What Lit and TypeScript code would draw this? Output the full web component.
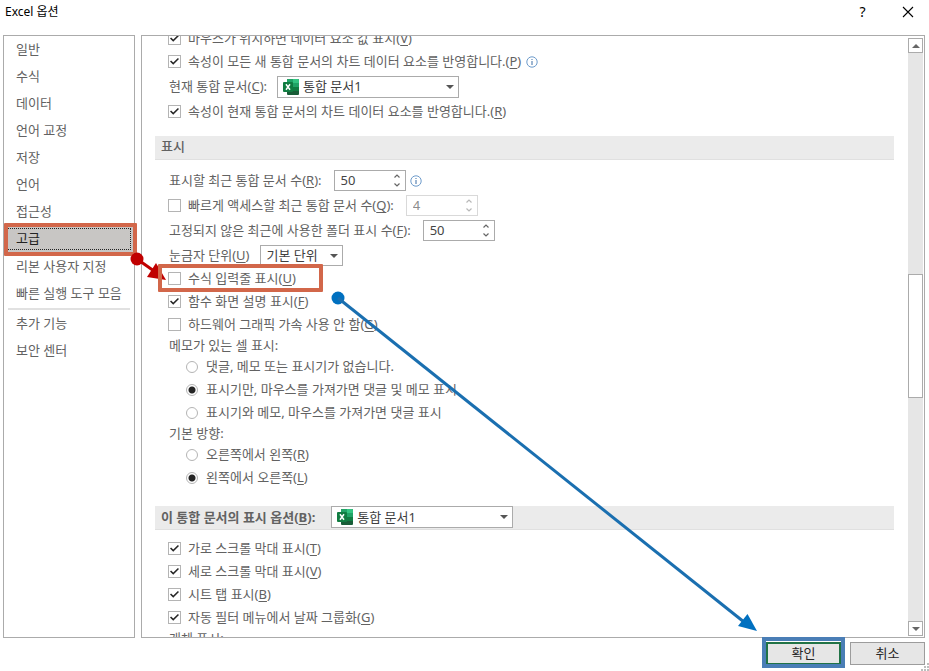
import { LitElement, html, svg, css, nothing } from "lit";
import { customElement, property } from "lit/decorators.js";

const excelIcon = html`<svg class="excel" viewBox="0 0 16 16" aria-hidden="true">
  <rect x="4" y="0" width="12" height="16" rx="1" fill="#185c37" />
  <path d="M5 0h5v4H4V1a1 1 0 0 1 1-1z" fill="#21a366" />
  <path d="M10 0h5a1 1 0 0 1 1 1v3h-6z" fill="#33c481" />
  <rect x="4" y="4" width="6" height="4" fill="#107c41" />
  <rect x="10" y="4" width="6" height="4" fill="#21a366" />
  <rect x="10" y="8" width="6" height="4" fill="#107c41" />
  <rect x="0" y="3" width="10" height="10" rx="1" fill="#107c41" />
  <path d="M3 5.2l4 5.6M7 5.2l-4 5.6" stroke="#fff" stroke-width="1.5" fill="none" />
</svg>`;

const infoIcon = html`<svg class="info" viewBox="0 0 12 12" role="img" aria-label="info">
  <circle cx="6" cy="6" r="5.2" fill="none" stroke="#6d9bcb" />
  <rect x="5.500" y="5" width="1" height="4" fill="#3c6ea5" />
  <rect x="5.500" y="3" width="1" height="1" fill="#3c6ea5" />
</svg>`;

const caret = html`<svg class="caret" viewBox="0 0 8 4" aria-hidden="true">
  <path d="M0 0h8L4 4z" fill="#555" />
</svg>`;

/* Splits "label(K)suffix" so that the access key is underlined. */
const keyed = (text: string) => {
  const m = /^(.*)\(([A-Z])\)(.*)$/.exec(text);
  return m ? html`${m[1]}(<u>${m[2]}</u>)${m[3]}` : html`${text}`;
};

const shared = css`
  * {
    box-sizing: border-box;
  }
  input,
  select,
  button {
    font: inherit;
    margin: 0;
  }
  u {
    text-underline-offset: 2px;
  }
`;

@customElement("check-row")
class CheckRow extends LitElement {
  @property() label = "";
  @property({ type: Boolean }) checked = false;
  @property({ type: Boolean }) info = false;
  @property({ type: Boolean }) marked = false;
  static styles = [
    shared,
    css`
      :host {
        display: flex;
        align-items: center;
        height: 23px;
      }
      label {
        position: relative;
        display: flex;
        align-items: center;
        gap: 7px;
        white-space: nowrap;
      }
      .box {
        appearance: none;
        width: 13px;
        height: 13px;
        flex: none;
        border: 1px solid #b4b4b4;
        background: #fff;
        display: grid;
        place-items: center;
      }
      .box:checked::before {
        content: "";
        width: 9px;
        height: 9px;
        background: #262626;
        clip-path: polygon(0 50%, 12% 38%, 36% 62%, 88% 10%, 100% 22%, 36% 86%);
      }
      .info {
        width: 12px;
        height: 12px;
        margin-left: 5px;
      }
      .marked::after {
        content: "";
        position: absolute;
        z-index: 1;
        inset: -5px -27px -4px -10px;
        border: 4px solid #d2674a;
        border-radius: 1px;
      }
    `,
  ];
  render() {
    return html`<label class=${this.marked ? "marked" : ""}>
        <input class="box" type="checkbox" .checked=${this.checked} />
        <span>${keyed(this.label)}</span>
      </label>${this.info ? infoIcon : nothing}`;
  }
}

@customElement("number-field")
class NumberField extends LitElement {
  @property() value = "";
  @property() label = "";
  @property({ type: Boolean }) disabled = false;
  static styles = [
    shared,
    css`
      :host {
        display: flex;
        width: 72px;
        height: 21px;
        border: 1px solid #ababab;
        background: #fff;
        color: #444;
      }
      :host([disabled]) {
        border-color: #d9d9d9;
        color: #8c8c8c;
      }
      .value {
        appearance: textfield;
        flex: 1;
        min-width: 0;
        border: 0;
        padding: 0 0 0 6px;
        background: none;
        color: inherit;
        outline: none;
      }
      .value::-webkit-inner-spin-button {
        appearance: none;
      }
      .spin {
        display: flex;
        flex-direction: column;
        width: 16px;
        color: #666;
      }
      :host([disabled]) .spin {
        color: #b8b8b8;
      }
      .step {
        flex: 1;
        min-height: 0;
        border: 0;
        padding: 0;
        background: none;
        color: inherit;
        display: grid;
        place-items: center;
      }
      .step svg {
        width: 6px;
        height: 4px;
      }
    `,
  ];
  render() {
    const step = (name: string, d: string) => html`<button
      class="step"
      aria-label=${name}
      ?disabled=${this.disabled}
    >
      <svg viewBox="0 0 6 4"><path d=${d} fill="none" stroke="currentColor" stroke-width="1.2" /></svg>
    </button>`;
    return html`<input
        class="value"
        type="number"
        aria-label=${this.label}
        .value=${this.value}
        ?disabled=${this.disabled}
      />
      <span class="spin">${step("up", "M.5 3.5L3 1l2.5 2.5")}${step("down", "M.5 .5L3 3 5.5 .5")}</span>`;
  }
}

@customElement("drop-down")
class DropDown extends LitElement {
  @property() value = "";
  @property() label = "";
  @property({ type: Boolean }) workbook = false;
  static styles = [
    shared,
    css`
      :host {
        display: flex;
        align-items: center;
        position: relative;
        width: 83px;
        height: 21px;
        padding-left: 2px;
        border: 1px solid #ababab;
        background: #fff;
        color: #404040;
        font-weight: 400;
        line-height: 19px;
      }
      :host([workbook]) {
        width: 182px;
        height: 22px;
        padding-left: 5px;
      }
      .excel {
        width: 16px;
        height: 16px;
        flex: none;
      }
      .list {
        appearance: none;
        flex: 1;
        min-width: 0;
        height: 19px;
        border: 0;
        padding: 0 16px 0 4px;
        background: none;
        color: inherit;
        outline: none;
      }
      .caret {
        position: absolute;
        right: 4px;
        width: 8px;
        height: 4px;
        pointer-events: none;
      }
    `,
  ];
  render() {
    return html`${this.workbook ? excelIcon : nothing}
      <select class="list" aria-label=${this.label}>
        <option>${this.value}</option>
      </select>
      ${caret}`;
  }
}

@customElement("radio-set")
class RadioSet extends LitElement {
  @property() label = "";
  @property({ type: Array }) options: string[] = [];
  @property({ type: Number }) selected = 0;
  static styles = [
    shared,
    css`
      :host {
        display: block;
      }
      .set {
        border: 0;
        margin: 0;
        padding: 0;
        min-width: 0;
      }
      .caption {
        padding: 0 0 0 1px;
        height: 19px;
        line-height: 19px;
      }
      .option {
        display: flex;
        align-items: center;
        gap: 8px;
        height: 23px;
        padding-left: 18px;
        white-space: nowrap;
      }
      .dot {
        appearance: none;
        flex: none;
        width: 12px;
        height: 12px;
        border: 1px solid #b4b4b4;
        border-radius: 50%;
        background: #fff;
      }
      .dot:checked {
        background: radial-gradient(circle, #262626 2px, #262626 3px, #fff 4px);
      }
    `,
  ];
  render() {
    return html`<fieldset class="set">
      <legend class="caption">${this.label}</legend>
      ${this.options.map(
        (o, i) => html`<label class="option">
          <input class="dot" type="radio" name="choice" .checked=${i === this.selected} />
          <span>${keyed(o)}</span>
        </label>`
      )}
    </fieldset>`;
  }
}

@customElement("app-root")
class AppRoot extends LitElement {
  static styles = [
    shared,
    css`
      :host {
        display: flex;
        flex-direction: column;
        position: relative;
        height: 100vh;
        overflow: hidden;
        background: #fff;
        color: #626262;
        font: 13px/19px "Noto Sans", "Noto Sans CJK KR", sans-serif;
      }
      .title {
        display: flex;
        align-items: center;
        height: 35px;
        padding: 0 14px 12px 5px;
        color: #000;
        font-size: 12px;
      }
      .title h1 {
        flex: 1;
        margin: 0;
        font: inherit;
      }
      .tool {
        display: grid;
        place-items: center;
        width: 45px;
        height: 23px;
        border: 0;
        padding: 0;
        background: none;
        color: #000;
        font-size: 14px;
      }
      .tool:last-child {
        width: 14px;
        margin-left: 16px;
      }
      .tool svg {
        width: 12px;
        height: 12px;
      }
      .body {
        display: flex;
        flex: 1;
        min-height: 0;
        gap: 6px;
        padding: 0 4px 0 3px;
      }
      .nav {
        flex: none;
        width: 132px;
        border: 1px solid #ababab;
      }
      .item {
        display: block;
        height: 27px;
        padding-left: 12px;
        line-height: 27px;
        color: inherit;
        text-decoration: none;
        white-space: nowrap;
      }
      .item.current {
        position: relative;
        height: 28px;
        background: #c8c6c4;
        color: #222;
        outline: 1px dotted #222;
        outline-offset: -4px;
      }
      .item.current::after {
        content: "";
        position: absolute;
        inset: -2px -3px -3px 0;
        border: 4px solid #d2674a;
        border-radius: 1px;
      }
      .rule {
        height: 2px;
        margin: 1px 4px 0;
        border: 0;
        background: #e1e1e1;
      }
      .pane {
        display: flex;
        flex: 1;
        min-width: 0;
        border: 1px solid #ababab;
        padding-right: 1px;
      }
      .content {
        flex: 1;
        min-width: 0;
        overflow: hidden;
        padding: 0 14px 0 13px;
      }
      .group {
        padding-left: 13px;
      }
      .group.first {
        margin-top: -9px;
      }
      .head {
        display: flex;
        height: 24px;
        margin: 0;
        padding-left: 6px;
        background: #ebebeb;
        border-bottom: 1px solid #e0e0e0;
        font-size: 13px;
        line-height: 21px;
        font-weight: 500;
      }
      .head.strong {
        gap: 16px;
        line-height: 23px;
        font-weight: 700;
      }
      .line {
        display: flex;
        align-items: center;
        padding-left: 1px;
        white-space: nowrap;
      }
      .line.tall {
        height: 27px;
        gap: 10px;
      }
      .fields {
        display: grid;
        gap: 4px;
        padding: 10px 0 1px 13px;
      }
      .fields .line {
        height: 21px;
        gap: 12px;
      }
      .fields .line.unit {
        gap: 10px;
      }
      .fields .line.flush {
        padding-left: 0;
      }
      .info {
        width: 12px;
        height: 12px;
        margin-left: -8px;
      }
      .space-1 {
        height: 13px;
      }
      .space-2 {
        height: 17px;
      }
      .group.last {
        padding-top: 7px;
      }
      .scroll {
        display: flex;
        flex-direction: column;
        flex: none;
        width: 15px;
        margin: 2px 0 1px;
        background: #e6e6e6;
      }
      .arrow {
        display: grid;
        place-items: center;
        flex: none;
        height: 15px;
        border: 1px solid #ababab;
        padding: 0;
        background: #fff;
      }
      .arrow svg {
        width: 8px;
        height: 4px;
      }
      .before {
        flex: 222 0 0;
      }
      .thumb {
        flex: 122 0 0;
        border: 1px solid #ababab;
        background: #fff;
      }
      .after {
        flex: 224 0 0;
      }
      .footer {
        display: flex;
        justify-content: flex-end;
        gap: 9px;
        height: 33px;
        padding: 4px 4px 6px 0;
      }
      .push {
        position: relative;
        width: 75px;
        border: 1px solid #9c9c9c;
        padding: 0;
        background: #e6e6e6;
        color: #262626;
        line-height: 19px;
      }
      .push.primary {
        border: 2px solid #217346;
      }
      .push.primary::after {
        content: "";
        position: absolute;
        inset: -7px -6px -5px -6px;
        border: 4px solid #4a7eb6;
      }
      .grip {
        position: absolute;
        right: 0;
        bottom: 0;
        width: 8px;
        height: 8px;
      }
      .marks {
        position: absolute;
        left: 0;
        top: 0;
        width: 100%;
        height: 100%;
        pointer-events: none;
      }
    `,
  ];

  render() {
    const nav = ["일반", "수식", "데이터", "언어 교정", "저장", "언어", "접근성", "고급", "리본 사용자 지정", "빠른 실행 도구 모음"];
    const item = (t: string) =>
      html`<a class="item ${t === "고급" ? "current" : ""}" href="#">${t}</a>`;
    const grip = [
      [6, 0], [3, 3], [6, 3], [0, 6], [3, 6], [6, 6],
    ];
    return html`
      <header class="title">
        <h1>Excel 옵션</h1>
        <button class="tool" aria-label="도움말">?</button>
        <button class="tool" aria-label="닫기">
          <svg viewBox="0 0 12 12"><path d="M1 1l10 10M11 1L1 11" stroke="#000" stroke-width="1.1" /></svg>
        </button>
      </header>
      <div class="body">
        <nav class="nav">
          ${nav.map(item)}
          <hr class="rule" />
          ${["추가 기능", "보안 센터"].map(item)}
        </nav>
        <main class="pane">
          <div class="content">
            <div class="group first">
              <check-row checked label="마우스가 위치하면 데이터 요소 값 표시(V)"></check-row>
              <check-row checked info label="속성이 모든 새 통합 문서의 차트 데이터 요소를 반영합니다.(P)"></check-row>
              <div class="line tall">
                <span>${keyed("현재 통합 문서(C):")}</span>
                <drop-down workbook label="현재 통합 문서" value="통합 문서1"></drop-down>
              </div>
              <check-row checked label="속성이 현재 통합 문서의 차트 데이터 요소를 반영합니다.(R)"></check-row>
            </div>
            <div class="space-1"></div>
            <h2 class="head">표시</h2>
            <div class="fields">
              <div class="line">
                <span>${keyed("표시할 최근 통합 문서 수(R):")}</span>
                <number-field label="표시할 최근 통합 문서 수" value="50"></number-field>
                ${infoIcon}
              </div>
              <div class="line flush">
                <check-row label="빠르게 액세스할 최근 통합 문서 수(Q):"></check-row>
                <number-field disabled label="빠르게 액세스할 최근 통합 문서 수" value="4"></number-field>
              </div>
              <div class="line">
                <span>${keyed("고정되지 않은 최근에 사용한 폴더 표시 수(F):")}</span>
                <number-field label="폴더 표시 수" value="50"></number-field>
              </div>
              <div class="line unit">
                <span>${keyed("눈금자 단위(U)")}</span>
                <drop-down label="눈금자 단위" value="기본 단위"></drop-down>
              </div>
            </div>
            <div class="group">
              <check-row marked label="수식 입력줄 표시(U)"></check-row>
              <check-row checked label="함수 화면 설명 표시(F)"></check-row>
              <check-row label="하드웨어 그래픽 가속 사용 안 함(G)"></check-row>
              <radio-set
                label="메모가 있는 셀 표시:"
                .options=${[
                  "댓글, 메모 또는 표시기가 없습니다.",
                  "표시기만, 마우스를 가져가면 댓글 및 메모 표시",
                  "표시기와 메모, 마우스를 가져가면 댓글 표시",
                ]}
                selected="1"
              ></radio-set>
              <radio-set
                label="기본 방향:"
                .options=${["오른쪽에서 왼쪽(R)", "왼쪽에서 오른쪽(L)"]}
                selected="1"
              ></radio-set>
            </div>
            <div class="space-2"></div>
            <h2 class="head strong">
              <span>${keyed("이 통합 문서의 표시 옵션(B):")}</span>
              <drop-down workbook label="통합 문서 선택" value="통합 문서1"></drop-down>
            </h2>
            <div class="group last">
              <check-row checked label="가로 스크롤 막대 표시(T)"></check-row>
              <check-row checked label="세로 스크롤 막대 표시(V)"></check-row>
              <check-row checked label="시트 탭 표시(B)"></check-row>
              <check-row checked label="자동 필터 메뉴에서 날짜 그룹화(G)"></check-row>
              <div class="line">개체 표시:</div>
            </div>
          </div>
          <div class="scroll">
            <button class="arrow" aria-label="위로">
              <svg viewBox="0 0 8 4"><path d="M0 4h8L4 0z" fill="#666" /></svg>
            </button>
            <div class="before"></div>
            <div class="thumb"></div>
            <div class="after"></div>
            <button class="arrow" aria-label="아래로">
              <svg viewBox="0 0 8 4"><path d="M0 0h8L4 4z" fill="#666" /></svg>
            </button>
          </div>
        </main>
      </div>
      <footer class="footer">
        <button class="push primary">확인</button>
        <button class="push">취소</button>
      </footer>
      <svg class="grip" viewBox="0 0 8 8" aria-hidden="true">
        ${grip.map(([x, y]) => svg`<rect x=${x} y=${y} width="2" height="2" fill="#bdbdbd" />`)}
      </svg>
      <svg class="marks" aria-hidden="true">
        <g fill="#c00000">
          <circle cx="137" cy="259" r="6.5" />
          <path d="M137 259L154 271" stroke="#c00000" stroke-width="3" />
          <path d="M166 280L147 277L156 263z" />
        </g>
        <g fill="#0070c0">
          <circle cx="338" cy="298" r="6.5" />
          <path d="M338 298L744 622" stroke="#1a6fb0" stroke-width="3" />
          <path d="M757 631L738 626L747.5 614z" />
        </g>
      </svg>
    `;
  }
}
